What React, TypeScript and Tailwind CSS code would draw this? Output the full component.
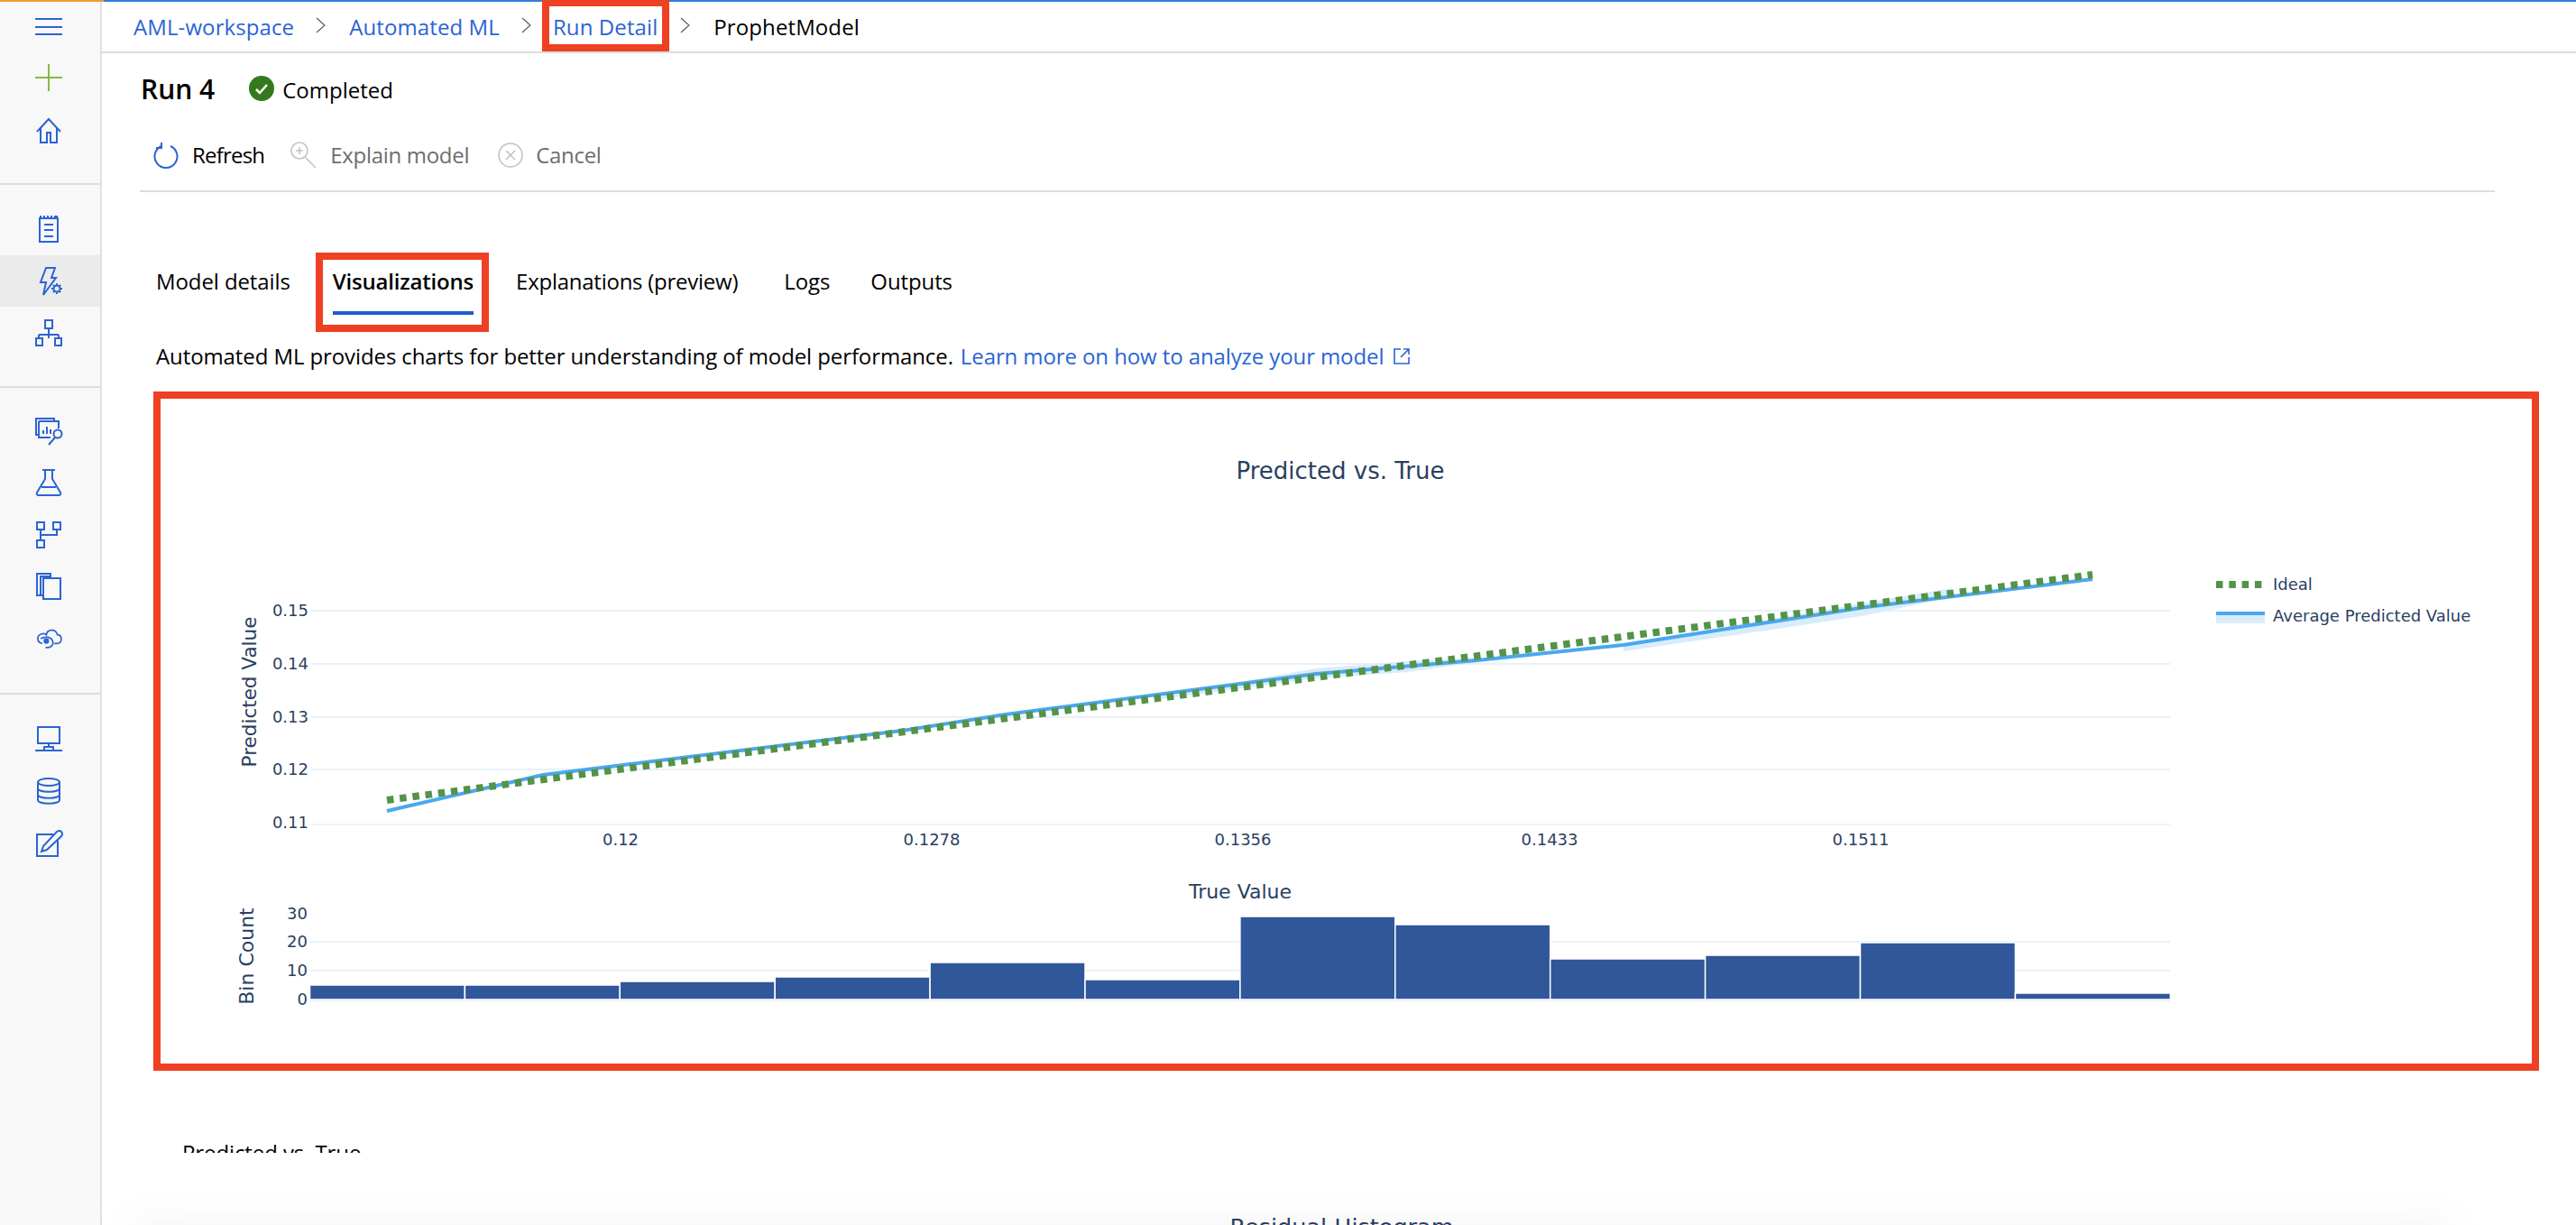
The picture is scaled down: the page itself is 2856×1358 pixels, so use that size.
import React from 'react';

const BLUE = '#2b64d3';

function Ico({ children, w = 32, h = 32 }: { children: React.ReactNode; w?: number; h?: number }) {
  return (
    <svg width={w} height={h} viewBox="0 0 32 32" fill="none" stroke={BLUE} strokeWidth="2">
      {children}
    </svg>
  );
}

const MenuIcon = () => (
  <Ico><path d="M1 7h30M1 16h30M1 24h30" strokeWidth="2" /></Ico>
);
const PlusIcon = () => (
  <Ico><path d="M16 1v30M1 16h30" stroke="#84bb45" strokeWidth="2" /></Ico>
);
const HomeIcon = () => (
  <Ico><path d="M3 17 16 3l13 14M7 13v16h7V18h4v11h7V13" /></Ico>
);
const NotepadIcon = () => (
  <Ico><path d="M6 4h20v26H6zM7 1v3M11 1v3M15 1v3M19 1v3M23 1v3M25 1v3M11 11h10M11 17h10M11 24h10" /></Ico>
);
const AutoMlIcon = () => (
  <Ico>
    <path d="M13 1h10l-4 11h5L10 31l3-14H7z" />
    <circle cx="25" cy="24" r="3.5" />
    <path d="M25 18v2.500M25 27.500V30M19 24h2.500M28.500 24H31M20.800 19.800l1.700 1.700M27.500 26.500l1.700 1.700M29.200 19.800l-1.700 1.700M22.500 26.500l-1.700 1.700" strokeWidth="1.800" />
  </Ico>
);
const TreeIcon = () => (
  <Ico><path d="M12 2h8v9h-8zM16 11v7M5 18h22M5 18v4M27 18v4M16 18v4M2 22h7v8H2zM23 22h7v8h-7z" /></Ico>
);
const DatasetSearchIcon = () => (
  <Ico w={34} h={32}>
    <path d="M5 20H2V2h20v3" />
    <path d="M5 5h22v8M5 5v18h13" />
    <path d="M10 19v-4M14 19v-8M18 19v-5" />
    <circle cx="26" cy="19" r="4.500" />
    <path d="m23 23-7 8" />
  </Ico>
);
const FlaskIcon = () => (
  <Ico><path d="M9 2h14M12 2v10L3 27q-1 3 2 3h22q3 0 2-3l-9-15V2M8 21h16" /></Ico>
);
const PipelineIcon = () => (
  <Ico><path d="M3 2h8v8H3zM21 2h8v8h-8zM3 22h8v8H3zM7 10v12M25 10v6H7" /></Ico>
);
const CopyIcon = () => (
  <Ico><path d="M10 26H3V2h15v5M10 7h19v23H10z" /><path d="M7 26V5h11" /></Ico>
);
const CloudIcon = () => (
  <Ico w={34} h={28}>
    <path d="M8 22C1 21 0 12 7 10c3-1 5 0 6 1 1-7 12-8 14 0 6 0 7 10 0 11h-4" />
    <path d="M6 16c4-3 13-3 15 3s-4 9-9 8" />
    <circle cx="13" cy="19" r="3.500" fill={BLUE} stroke="none" />
  </Ico>
);
const MonitorIcon = () => (
  <Ico><path d="M4 3h24v18H4zM16 21v4M11 25h10v4H11zM1 29h10M21 29h10" /></Ico>
);
const DatabaseIcon = () => (
  <Ico>
    <ellipse cx="16" cy="6" rx="12" ry="4" />
    <path d="M4 6v20c0 5 24 5 24 0V6M4 13c0 5 24 5 24 0M4 20c0 5 24 5 24 0" />
  </Ico>
);
const EditIcon = () => (
  <Ico>
    <path d="M26 13v17H3V6h18" />
    <path d="m8 25 2-6L25 3q3-2 5 0t0 5L14 23z" />
  </Ico>
);

function Row({ h, active, children }: { h: string; active?: boolean; children: React.ReactNode }) {
  return (
    <div className={`flex items-center justify-center pr-[3px] ${h} ${active ? 'bg-[#ebebeb]' : ''}`}>{children}</div>
  );
}

function Sidebar() {
  return (
    <div className="w-[113px] shrink-0 h-full bg-[#f8f8f8] border-r-2 border-[#e1e1e1] flex flex-col">
      <div className="h-[201px] shrink-0 border-b-2 border-[#dedede] box-content">
        <Row h="h-[56px]"><MenuIcon /></Row>
        <Row h="h-[56px]"><PlusIcon /></Row>
        <Row h="h-[62px]"><HomeIcon /></Row>
      </div>
      <div className="h-[204px] shrink-0 pt-[19px] border-b-2 border-[#dedede] box-content">
        <Row h="h-[59px]"><NotepadIcon /></Row>
        <Row h="h-[57px]" active><AutoMlIcon /></Row>
        <Row h="h-[57px]"><TreeIcon /></Row>
      </div>
      <div className="h-[319px] shrink-0 pt-[19px] border-b-2 border-[#dedede] box-content">
        <Row h="h-[57.5px]"><DatasetSearchIcon /></Row>
        <Row h="h-[57.5px]"><FlaskIcon /></Row>
        <Row h="h-[57.5px]"><PipelineIcon /></Row>
        <Row h="h-[57.5px]"><CopyIcon /></Row>
        <Row h="h-[57.5px]"><CloudIcon /></Row>
      </div>
      <div className="pt-[20px]">
        <Row h="h-[58px]"><MonitorIcon /></Row>
        <Row h="h-[58px]"><DatabaseIcon /></Row>
        <Row h="h-[58px]"><EditIcon /></Row>
      </div>
    </div>
  );
}

const Sep = () => (
  <svg width="12" height="18" viewBox="0 0 12 18" fill="none" stroke="#555" strokeWidth="1.1" className="-mt-[3px]">
    <path d="m1 1 9 8-9 8" />
  </svg>
);

function Breadcrumb() {
  return (
    <div className="h-[55px] shrink-0 border-b-2 border-[#dcdcdc] box-content flex items-center pl-[35px] text-[24px] tracking-[0.1px] text-[#2b64d3]">
      <span>AML-workspace</span>
      <span className="ml-[24px]"><Sep /></span>
      <span className="ml-[25px]">Automated ML</span>
      <span className="ml-[24px]"><Sep /></span>
      <span className="relative ml-[23px]">
        Run Detail
        <span className="absolute -left-[12px] -right-[13px] -top-[13px] -bottom-[9px] border-[8px] border-[#ee4023]" />
      </span>
      <span className="ml-[25px]"><Sep /></span>
      <span className="text-black ml-[25px]">ProphetModel</span>
    </div>
  );
}

const dims = 'text-[#6e6e6e]';

function Toolbar() {
  return (
    <div className="h-[70px] shrink-0 flex items-center pl-[57px] text-[24px] tracking-[-0.3px]">
      <svg width="28" height="30" viewBox="0 0 28 30" fill="none" stroke={BLUE} strokeWidth="2">
        <path d="M9 5a12.5 12.5 0 1 0 10 0" />
        <path d="M9 1v6H3" />
      </svg>
      <span className="ml-[15px] text-black tracking-[-0.8px]">Refresh</span>
      <svg className="ml-[28px]" width="30" height="30" viewBox="0 0 30 30" fill="none" stroke="#c4c4c4" strokeWidth="1.6">
        <circle cx="11" cy="10" r="9" />
        <path d="m17 17 12 12M11 6v8M7 10h8" />
      </svg>
      <span className={`ml-[15px] ${dims}`}>Explain model</span>
      <svg className="ml-[32px]" width="28" height="28" viewBox="0 0 28 28" fill="none" stroke="#c4c4c4" strokeWidth="1.6">
        <circle cx="14" cy="14" r="13" />
        <path d="m9 9 10 10M19 9 9 19" />
      </svg>
      <span className={`ml-[14px] ${dims}`}>Cancel</span>
    </div>
  );
}

function Tabs() {
  return (
    <div className="mt-[79px] h-[57px] shrink-0 flex pl-[60px] text-[24px] tracking-[-0.1px] text-black leading-[40px]">
      <span>Model details</span>
      <span className="relative ml-[47px] font-semibold tracking-[-0.2px]">
        Visualizations
        <span className="absolute left-0 right-0 bottom-0 h-[4px] bg-[#1f5ccc]" />
        <span className="absolute -left-[19px] -right-[17px] -top-[12px] -bottom-[19px] border-[8px] border-[#ee4023]" />
      </span>
      <span className="ml-[47px] tracking-[-0.25px]">Explanations (preview)</span>
      <span className="ml-[51px]">Logs</span>
      <span className="ml-[45px]">Outputs</span>
    </div>
  );
}

const bars = [1092, 1092, 1088, 1083, 1067, 1086, 1016, 1025, 1063, 1059, 1045, 1101];
const blueLine = '429,899 602,859 1000,810 1115,792 1459,747 1638,732 1800,715 2069,673 2320,642';
const band1 = '1280,773 1459,741 1560,733 1640,729 1640,734 1560,745 1459,752 1280,776';
const band2 = '1800,715 2069,668 2164,652 2164,662 2069,682 1978,696 1800,722';
const gridY = [677, 736, 795, 853, 914];
const yTicks = [
  ['0.15', 677],
  ['0.14', 736],
  ['0.13', 795],
  ['0.12', 853],
  ['0.11', 912],
] as const;
const xTicks = [
  ['0.12', 688],
  ['0.1278', 1033],
  ['0.1356', 1378],
  ['0.1433', 1718],
  ['0.1511', 2063],
] as const;
const histTicks = [
  ['30', 1013],
  ['20', 1044],
  ['10', 1076],
  ['0', 1108],
] as const;

function Chart() {
  return (
    <svg width="2629" height="737" viewBox="178 442 2629 737" className="block" fontFamily="'DejaVu Sans', sans-serif" fill="#2a3f5f">
      <text x="1486" y="531" fontSize="26" textAnchor="middle">Predicted vs. True</text>

      {gridY.map((y) => (
        <line key={y} x1="345" x2="2406" y1={y} y2={y} stroke="#ebf0f8" strokeWidth={y === 914 ? 1.5 : 2} />
      ))}
      {yTicks.map(([t, y]) => (
        <text key={t} x="342" y={y + 6} fontSize="18" textAnchor="end">{t}</text>
      ))}
      {xTicks.map(([t, x]) => (
        <text key={t} x={x} y="937" fontSize="18" textAnchor="middle">{t}</text>
      ))}
      <text transform="translate(284 767) rotate(-90)" fontSize="21.5" textAnchor="middle">Predicted Value</text>

      <polygon points={band1} fill="#d9ecfb" />
      <polygon points={band2} fill="#d9ecfb" />
      <polyline points={blueLine} fill="none" stroke="#4aa8ee" strokeWidth="4" />
      <line x1="429" y1="887" x2="2320" y2="637" stroke="#53934a" strokeWidth="8" strokeDasharray="7.5 6.8" />

      <line x1="2457" x2="2511" y1="648" y2="648" stroke="#53934a" strokeWidth="8" strokeDasharray="7.5 6.8" />
      <rect x="2457" y="678" width="54" height="13" fill="#d9ecfb" />
      <line x1="2457" x2="2511" y1="680" y2="680" stroke="#4aa8ee" strokeWidth="4" />
      <text x="2520" y="654" fontSize="18">Ideal</text>
      <text x="2520" y="689" fontSize="18">Average Predicted Value</text>

      <text x="1375" y="996" fontSize="22" textAnchor="middle">True Value</text>
      {[1044, 1076].map((y) => (
        <line key={y} x1="343" x2="2406" y1={y} y2={y} stroke="#ebf0f8" strokeWidth="2" />
      ))}
      <line x1="343" x2="2406" y1="1109" y2="1109" stroke="#ebf0f8" strokeWidth="3" />
      {histTicks.map(([t, y]) => (
        <text key={t} x="341" y={y + 6} fontSize="18" textAnchor="end">{t}</text>
      ))}
      <text transform="translate(281 1060) rotate(-90)" fontSize="22" textAnchor="middle">Bin Count</text>
      {bars.map((top, i) => (
        <rect key={i} x={343.5 + i * 171.9} y={top} width="171.9" height={1108 - top} fill="#2f5799" stroke="#fff" strokeWidth="1.5" />
      ))}
    </svg>
  );
}

export default function App() {
  return (
    <div className="w-full h-screen overflow-hidden bg-white flex flex-col font-['Open_Sans',sans-serif]">
      <div className="h-[2px] shrink-0 flex">
        <div className="w-[115px] bg-[#f29a38]" />
        <div className="flex-1 bg-[#2f7fd6]" />
      </div>
      <div className="flex-1 flex min-h-0">
        <Sidebar />
        <div className="flex-1 min-w-0 flex flex-col">
          <Breadcrumb />
          <div className="h-[78px] shrink-0 flex items-center pl-[43px]">
            <span className="text-[30px] font-semibold text-black">Run 4</span>
            <svg className="ml-[38px]" width="28" height="28" viewBox="0 0 28 28">
              <circle cx="14" cy="14" r="14" fill="#35791f" />
              <path d="m8 15 4 4 8-9" fill="none" stroke="#fff" strokeWidth="2.5" />
            </svg>
            <span className="ml-[9px] text-[24px] tracking-[0px] text-black translate-y-[2px]">Completed</span>
          </div>
          <Toolbar />
          <div className="ml-[42px] w-[2611px] mt-[4px] h-[2px] shrink-0 bg-[#dcdcdc]" />
          <Tabs />
          <div className="mt-[30px] h-[32px] shrink-0 leading-[32px] pl-[60px] text-[24px] tracking-[-0.1px] text-black flex items-center">
            <span>Automated ML provides charts for better understanding of model performance.</span>
            <span className="ml-[8px] text-[#2b64d3]">Learn more on how to analyze your model</span>
            <svg className="ml-[11px]" width="18" height="18" viewBox="0 0 18 18" fill="none" stroke={BLUE} strokeWidth="1.6">
              <path d="M8 1H1v16h16v-7M11 1h6v6M17 1 8 10" />
            </svg>
          </div>
          <div className="ml-[57px] mt-[23px] w-[2645px] h-[753px] shrink-0 border-[8px] border-[#ee4023]">
            <Chart />
          </div>
          <div className="ml-[89px] mt-[79px] h-[12px] shrink-0 overflow-hidden text-[24px] leading-[24px] tracking-[-0.1px] text-black">
            Predicted vs. True
          </div>
          <div className="relative mt-[52px] h-[60px] shrink-0 text-center pt-[16px] font-['DejaVu_Sans',sans-serif] text-[25.5px] leading-[28px] text-[#2a3f5f]">
            <div className="absolute left-[40px] w-[2560px] top-[30px] h-[60px] bg-[#f0f0f0] blur-[20px]" />
            <span className="relative left-[3px]">Residual Histogram</span>
          </div>
        </div>
      </div>
    </div>
  );
}
